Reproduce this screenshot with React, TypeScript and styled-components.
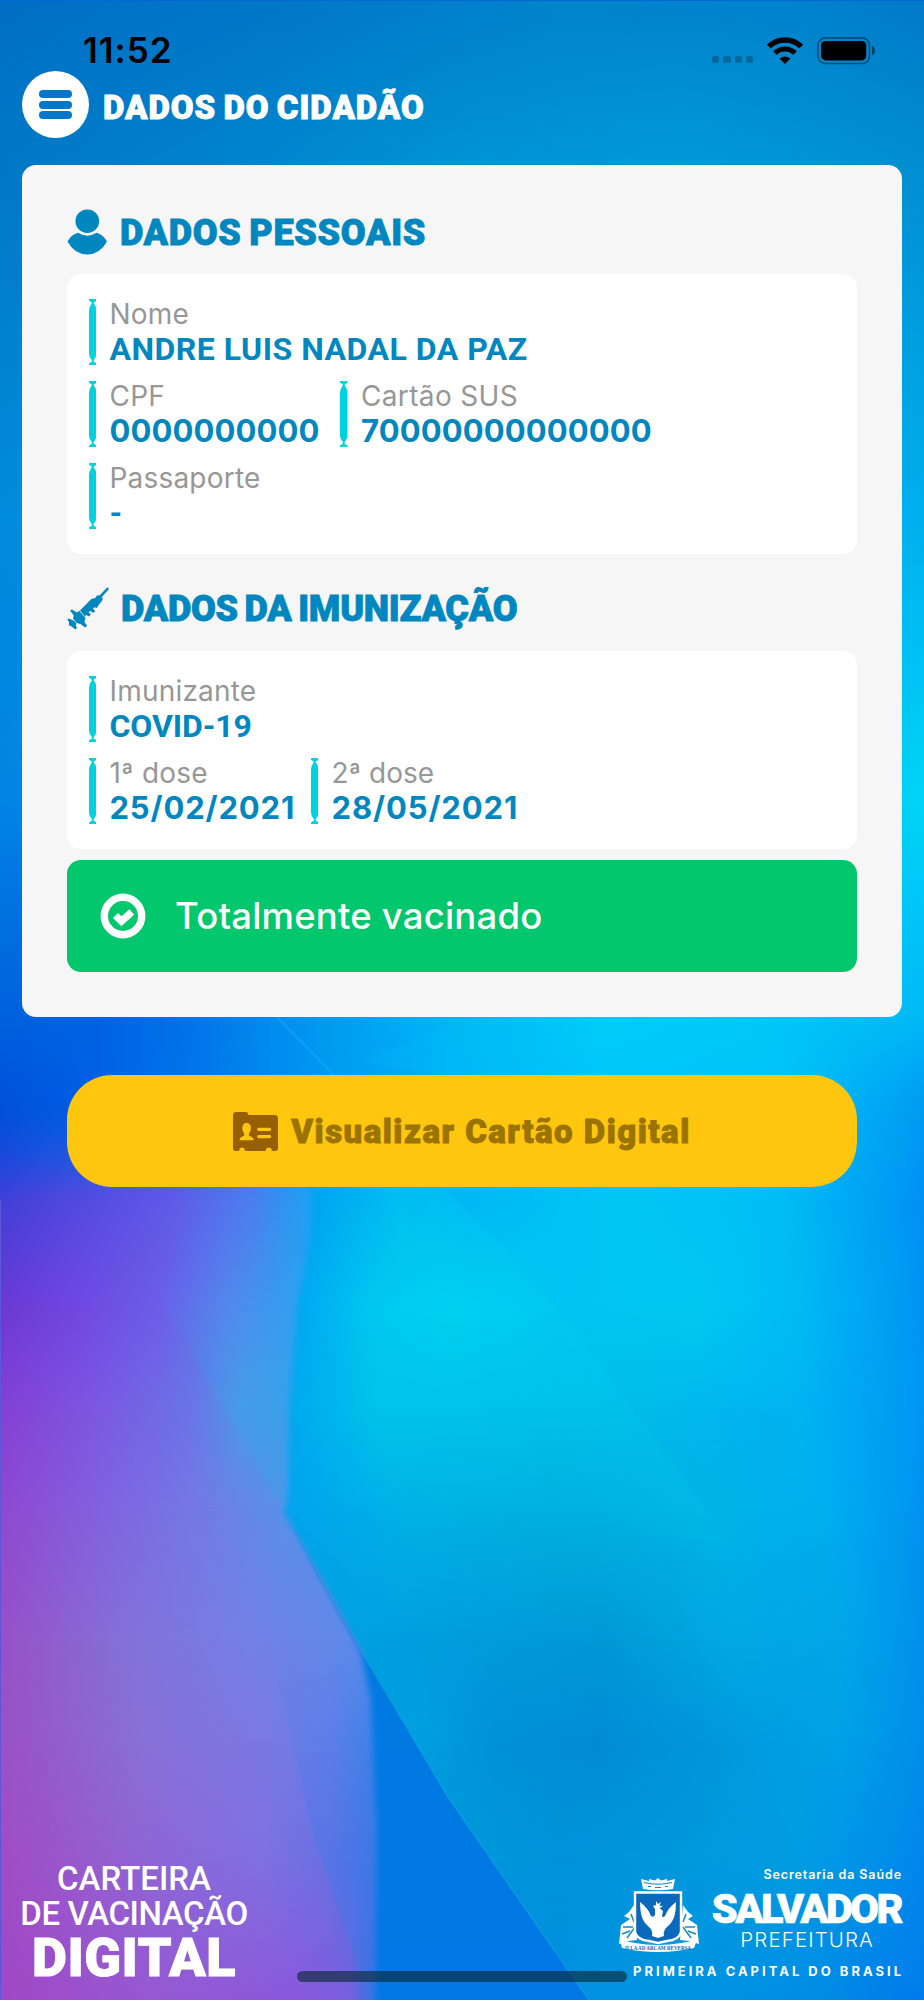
import React from "react";
import styled, { createGlobalStyle } from "styled-components";

const GlobalStyle = createGlobalStyle`
  * { box-sizing: border-box; }
  body { margin: 0; }
`;

const display = `Roboto, "Open Sans", sans-serif`;
const system = `Inter, "Liberation Sans", sans-serif`;

const Screen = styled.main`
  position: relative;
  display: flex;
  flex-direction: column;
  width: 924px;
  height: 2000px;
  overflow: hidden;
  background: #0084d0;
  font-family: ${system};
  white-space: nowrap;
`;

const Backdrop = styled.svg`
  position: absolute;
  inset: 0;
  width: 924px;
  height: 2000px;
`;

const Content = styled.div`
  position: relative;
  display: flex;
  flex-direction: column;
  flex: 1;
`;

const StatusBar = styled.div`
  display: flex;
  align-items: center;
  justify-content: space-between;
  height: 71px;
  padding: 30px 48px 0 83px;
`;

const Clock = styled.span`
  font-size: 35px;
  line-height: 41px;
  font-weight: 600;
  letter-spacing: 1px;
  color: #000000;
`;

const StatusIcons = styled.div`
  display: flex;
  align-items: center;
  gap: 14px;
`;

const Signal = styled.div`
  display: flex;
  gap: 4px;
  margin-top: 18px;
`;

const SignalDot = styled.i`
  width: 7.2px;
  height: 7.2px;
  border-radius: 2px;
  background: rgba(0, 0, 0, 0.24);
`;

const Header = styled.header`
  display: flex;
  align-items: center;
  gap: 13.5px;
  height: 67px;
  margin: 0 22.4px;
`;

const MenuButton = styled.button`
  display: flex;
  flex-direction: column;
  align-items: center;
  justify-content: center;
  gap: 2.4px;
  width: 67px;
  height: 67px;
  padding: 0;
  border: 0;
  border-radius: 50%;
  background: #ffffff;
`;

const MenuLine = styled.i`
  width: 33px;
  height: 8px;
  border-radius: 4px;
  background: #0077c8;
`;

const Title = styled.h1`
  margin: 6px 0 0;
  font-family: ${display};
  font-size: 33px;
  line-height: 40px;
  font-weight: 900;
  letter-spacing: 1px;
  word-spacing: -2px;
  -webkit-text-stroke: 0.9px currentColor;
  color: #ffffff;
`;

const Card = styled.section`
  margin: 27px 22.4px 0;
  padding: 44px 44.6px 44.5px;
  height: 852px;
  border-radius: 14px;
  background: #f6f6f6;
`;

const SectionHeading = styled.div<{ $top?: number }>`
  display: flex;
  align-items: center;
  gap: 12px;
  height: 46px;
  margin-top: ${({ $top }) => $top ?? 0}px;
  margin-bottom: 19.4px;
`;

const SectionTitle = styled.h2<{ $spacing: number }>`
  margin: 1px 0 0;
  font-family: ${display};
  font-size: 36px;
  line-height: 46px;
  font-weight: 900;
  letter-spacing: ${({ $spacing }) => $spacing}px;
  word-spacing: -2px;
  -webkit-text-stroke: 0.9px currentColor;
  color: #0087bf;
`;

const Panel = styled.div`
  display: flex;
  flex-direction: column;
  gap: 15.5px;
  padding: 24.5px 22px 24.5px;
  border-radius: 14px;
  background: #ffffff;
`;

const Row = styled.div`
  display: flex;
`;

const FieldBox = styled.div<{ $width?: number }>`
  display: flex;
  gap: 13px;
  width: ${({ $width }) => ($width ? `${$width}px` : "auto")};
  height: 66.5px;
`;

const Label = styled.div<{ $spacing: number }>`
  font-size: 28px;
  line-height: 31px;
  letter-spacing: ${({ $spacing }) => $spacing}px;
  color: #979797;
`;

const Value = styled.div<{ $spacing: number; $numeric?: boolean }>`
  font-family: ${({ $numeric }) => ($numeric ? system : display)};
  font-size: ${({ $numeric }) => ($numeric ? 31 : 32)}px;
  line-height: 38px;
  font-weight: 700;
  letter-spacing: ${({ $spacing }) => $spacing}px;
  color: #0087bf;
`;

const Status = styled.div`
  display: flex;
  align-items: center;
  gap: 29px;
  height: 112.5px;
  margin-top: 11px;
  padding-left: 33px;
  border-radius: 14px;
  background: #02c76c;
  font-size: 36.5px;
  font-weight: 500;
  letter-spacing: 0.2px;
  color: #ffffff;
`;

const CardButton = styled.button`
  display: flex;
  align-items: center;
  justify-content: center;
  gap: 13px;
  height: 112px;
  margin: 58px 67px 0;
  padding: 0;
  border: 0;
  border-radius: 45px;
  background: #fec60e;
  font-family: ${display};
  font-size: 33px;
  font-weight: 900;
  letter-spacing: 1.5px;
  -webkit-text-stroke: 0.9px currentColor;
  color: #9b7300;
`;

const Footer = styled.footer`
  display: flex;
  justify-content: space-between;
  align-items: flex-end;
  margin-top: auto;
  padding: 0 22px 15.5px;
  color: #ffffff;
`;

const Brand = styled.div`
  width: 224px;
  display: flex;
  flex-direction: column;
  align-items: center;
  font-family: ${display};
`;

const BrandLine = styled.span<{ $spacing: number }>`
  font-size: 33px;
  line-height: 35px;
  font-weight: 500;
  letter-spacing: ${({ $spacing }) => $spacing}px;
`;

const BrandStrong = styled.span`
  font-size: 54px;
  line-height: 54px;
  font-weight: 900;
  letter-spacing: 0.5px;
  -webkit-text-stroke: 1px currentColor;
`;

const City = styled.div`
  display: flex;
  flex-direction: column;
  align-items: flex-end;
  margin-bottom: 3.5px;
`;

const CityTop = styled.div`
  display: flex;
  gap: 13px;
`;

const CityText = styled.div`
  display: flex;
  flex-direction: column;
  align-items: flex-end;
`;

const Department = styled.span`
  font-size: 12.5px;
  line-height: 20px;
  font-weight: 600;
  letter-spacing: 0.9px;
`;

const CityName = styled.span`
  margin-right: 1px;
  font-family: ${display};
  font-size: 41.5px;
  line-height: 47px;
  font-weight: 900;
  letter-spacing: -2.5px;
  -webkit-text-stroke: 0.6px currentColor;
`;

const CityHall = styled.span`
  margin-right: 28px;
  font-size: 20.5px;
  line-height: 16px;
  font-weight: 300;
  letter-spacing: 1.1px;
`;

const Tagline = styled.span`
  margin-top: 9.5px;
  margin-right: -2px;
  font-size: 13px;
  line-height: 20px;
  font-weight: 700;
  letter-spacing: 3px;
`;

const HomeIndicator = styled.div`
  position: absolute;
  left: 297px;
  bottom: 18px;
  width: 330px;
  height: 11px;
  border-radius: 6px;
  background: rgba(8, 38, 52, 0.62);
`;

type Band = { y: number; stops: [number, string][] };

const seaBands: Band[] = [
  { y: 0, stops: [[0, "#006fc6"], [300, "#0078c8"], [560, "#0084cc"], [800, "#0082cc"], [924, "#007ac8"]] },
  { y: 160, stops: [[0, "#0078c6"], [220, "#0082cc"], [440, "#0092d2"], [680, "#0099d8"], [924, "#008ed0"]] },
  { y: 520, stops: [[0, "#008cdc"], [400, "#00a0e0"], [924, "#00b0ee"]] },
  { y: 800, stops: [[0, "#0084e4"], [400, "#00a0e8"], [924, "#00d4f8"]] },
  { y: 1020, stops: [[0, "#0060dc"], [100, "#0062e4"], [200, "#0076ea"], [300, "#0094f0"], [440, "#00b4f6"], [600, "#00ccf8"], [760, "#00c8f8"], [924, "#00b8f6"]] },
  { y: 1100, stops: [[0, "#0052dc"], [100, "#0060e4"], [220, "#007cec"], [340, "#009cf2"], [480, "#00b8f8"], [600, "#00c6fa"], [780, "#00c4f8"], [924, "#009cf2"]] },
  { y: 1200, stops: [[0, "#1048dc"], [300, "#00a0f0"], [400, "#00c0f0"], [470, "#00b8f4"], [620, "#00c8f4"], [780, "#00bef4"], [924, "#0090f4"]] },
  { y: 1310, stops: [[0, "#0088e8"], [300, "#00a8f2"], [370, "#00c8f0"], [450, "#00d0f0"], [560, "#00c4f2"], [700, "#00c8f2"], [800, "#00baf4"], [924, "#0094f2"]] },
  { y: 1410, stops: [[0, "#0088e8"], [290, "#00a8f0"], [380, "#00c4ea"], [520, "#00c2e8"], [660, "#00baea"], [800, "#00b4f2"], [924, "#0094f2"]] },
  { y: 1510, stops: [[0, "#0088e8"], [290, "#00a4ee"], [400, "#00b2e6"], [550, "#00b0e0"], [720, "#00b4e6"], [830, "#00aef0"], [924, "#0090f0"]] },
  { y: 1640, stops: [[0, "#0080e0"], [365, "#00a0e0"], [460, "#009cdc"], [600, "#0098d6"], [730, "#00a8e0"], [850, "#00a4e8"], [924, "#008eec"]] },
  { y: 1740, stops: [[0, "#0078e0"], [420, "#00a0e0"], [500, "#0090d6"], [600, "#008cd4"], [740, "#009ade"], [840, "#00a0e6"], [924, "#008aea"]] },
  { y: 1860, stops: [[0, "#0078e0"], [480, "#0098dc"], [560, "#0092da"], [660, "#0098dc"], [800, "#009ce2"], [924, "#0084ec"]] },
  { y: 2000, stops: [[0, "#0078e8"], [570, "#0090e0"], [680, "#0094e0"], [820, "#008ce4"], [924, "#0078ec"]] },
];

const violetBands: Band[] = [
  { y: 1100, stops: [[0, "#0a50dc"], [100, "#1860e4"], [220, "#107cec"], [312, "#009cf2"]] },
  { y: 1190, stops: [[0, "#3c40d8"], [60, "#4c48dc"], [170, "#6058e8"], [250, "#4c7cee"], [310, "#1ca2f2"]] },
  { y: 1306, stops: [[0, "#6c38d4"], [80, "#7048e2"], [165, "#6a60e8"], [230, "#5488ec"], [295, "#30a0f0"]] },
  { y: 1408, stops: [[0, "#8440d4"], [100, "#7c58e2"], [190, "#6a74e6"], [240, "#4c98e8"], [295, "#38a0ea"]] },
  { y: 1510, stops: [[0, "#9048d0"], [110, "#8064e0"], [200, "#747ae6"], [285, "#5890e8"]] },
  { y: 1640, stops: [[0, "#9850c8"], [120, "#8470d8"], [250, "#7480e6"], [357, "#5c8aea"]] },
  { y: 1740, stops: [[0, "#9a50c6"], [140, "#8870d8"], [260, "#7c78e2"], [330, "#6480e8"], [375, "#3c84e8"]] },
  { y: 1860, stops: [[0, "#a04cc6"], [140, "#9064d4"], [260, "#8070e2"], [330, "#6870e2"], [377, "#3878e4"]] },
  { y: 2000, stops: [[0, "#a048c6"], [150, "#9658d2"], [300, "#8a58dc"], [350, "#7860de"], [377, "#2870e4"]] },
];

/* Each band fades in over the one above, so colours blend in both directions. */
const Bands = ({ id, bands, width }: { id: string; bands: Band[]; width: number }) => (
  <>
    {bands.map((band, i) => {
      const from = i === 0 ? band.y : bands[i - 1].y;
      const span = 2000 - from;
      const fade = (band.y - from) / span;
      return (
        <g key={band.y}>
          <linearGradient id={`${id}${i}`} gradientUnits="userSpaceOnUse" x1="0" x2={width} y1="0" y2="0">
            {band.stops.map(([x, color]) => (
              <stop key={x} offset={x / width} stopColor={color} />
            ))}
          </linearGradient>
          <linearGradient id={`${id}Fade${i}`} x1="0" x2="0" y1="0" y2="1">
            <stop offset="0" stopColor="#fff" stopOpacity={i === 0 ? 1 : 0} />
            <stop offset={fade} stopColor="#fff" />
          </linearGradient>
          <mask id={`${id}Mask${i}`} maskUnits="userSpaceOnUse" x="0" y={from} width={width} height={span}>
            <rect x="0" y={from} width={width} height={span} fill={`url(#${id}Fade${i})`} />
          </mask>
          <rect x="0" y={from} width={width} height={span} fill={`url(#${id}${i})`} mask={`url(#${id}Mask${i})`} />
        </g>
      );
    })}
  </>
);

const Background = () => (
  <Backdrop viewBox="0 0 924 2000" aria-hidden="true">
    <defs>
      <linearGradient id="edgeFade" x1="0" x2="0" y1="0" y2="1">
        <stop offset="0" stopColor="#000" />
        <stop offset="0.1" stopColor="#fff" />
      </linearGradient>
      <filter id="soft" x="-5%" y="-5%" width="110%" height="110%">
        <feGaussianBlur stdDeviation="3" />
      </filter>
      <mask id="violetShape" maskUnits="userSpaceOnUse" x="0" y="1100" width="400" height="900">
        <path
          d="M-20 1106 L312 1106 L312 1215 Q308 1260 298 1300 L290 1400 L288 1500 L284 1512 L330 1595 L360 1650 L371 1700 L377 1830 L376 2020 L-20 2020Z"
          fill="url(#edgeFade)"
          filter="url(#soft)"
        />
      </mask>
      <linearGradient id="deep" x1="0" x2="0" y1="0" y2="1">
        <stop offset="0" stopColor="#0088e0" />
        <stop offset="0.35" stopColor="#007ae0" />
        <stop offset="1" stopColor="#0078e6" />
      </linearGradient>
      <linearGradient id="ray" x1="0" x2="1" y1="1" y2="0">
        <stop offset="0.35" stopColor="#00e0f0" stopOpacity="0" />
        <stop offset="0.6" stopColor="#00e0f0" stopOpacity="0.22" />
      </linearGradient>
      <linearGradient id="facet" x1="0" x2="0" y1="0" y2="1">
        <stop offset="0.2" stopColor="#30a8ec" stopOpacity="0" />
        <stop offset="0.8" stopColor="#30a8ec" stopOpacity="0.26" />
      </linearGradient>
      <linearGradient id="fold" x1="0" x2="0" y1="0" y2="1">
        <stop offset="0" stopColor="#4078e8" stopOpacity="0" />
        <stop offset="0.6" stopColor="#4078e8" stopOpacity="0.4" />
      </linearGradient>
    </defs>
    <Bands id="sea" bands={seaBands} width={924} />
    <path d="M439 1186 Q520 1260 589 1351 T730 1545 L420 1500 L400 1250Z" fill="url(#ray)" opacity="0.7" />
    <path d="M589 1450 Q680 1590 720 1690 T830 1900 L924 2000 V1350Z" fill="#00b8f0" opacity="0.08" />
    <path d="M277 1017 L335 1076" stroke="#18b0f4" strokeWidth="2" opacity="0.5" />
    <path d="M360 1062 L475 1017 H700 L480 1080Z" fill="#00d0f8" opacity="0.12" />
    <path d="M284 1512 L365 1657 L448 1797 L589 2000 L350 2000 L350 1640Z" fill="url(#deep)" />
    <path d="M300 1540 L365 1657 L448 1797 L589 2000" stroke="#10a0e0" strokeWidth="2" fill="none" opacity="0.6" />
    <g mask="url(#violetShape)">
      <Bands id="violet" bands={violetBands} width={400} />
      <path d="M120 1210 L165 1306 L284 1512 L320 1512 L320 1210Z" fill="url(#facet)" />
      <path d="M270 1650 L295 1752 L312 1830 L368 2000 H380 V1650Z" fill="url(#fold)" />
    </g>
    <rect width="924" height="1" fill="#0068d4" />
    <rect y="1200" width="1" height="800" fill="#5858d8" />
  </Backdrop>
);

const WifiIcon = () => (
  <svg width="36" height="27" viewBox="0 0 36 27">
    <path d="M1.8 9.6 A23 23 0 0 1 34.2 9.6" fill="none" stroke="#000" strokeWidth="5.4" />
    <path d="M8 16.1 A14.3 14.3 0 0 1 28 16.1" fill="none" stroke="#000" strokeWidth="5" />
    <path d="M18 27 L12.6 21.5 A8 8 0 0 1 23.4 21.5Z" fill="#000" />
  </svg>
);

const BatteryIcon = () => (
  <svg width="59" height="28" viewBox="0 0 59 28">
    <rect x="0.9" y="0.9" width="51.6" height="25.6" rx="7.5" fill="none" stroke="#000" strokeOpacity="0.42" strokeWidth="1.7" />
    <rect x="4" y="4" width="45.2" height="19.4" rx="4.4" fill="#000" />
    <path d="M55 9 Q58 10.5 58 13.8 T55 18.6Z" fill="#000" fillOpacity="0.48" />
  </svg>
);

const PersonIcon = () => (
  <svg width="41" height="46" viewBox="0 0 41 46" fill="#0087bf">
    <circle cx="20.3" cy="12.2" r="11.8" />
    <path d="M11 23.8 Q20.3 29.5 29.6 23.8 Q36 25.5 40 32.5 Q33 45.3 20.3 45.5 Q7.5 45.3 0.5 32.5 Q4.5 25.5 11 23.8Z" />
  </svg>
);

const SyringeIcon = () => (
  <svg width="42" height="43" viewBox="0 0 42 43" fill="#0087bf">
    <path d="M40.4 0.3 L42 1.9 L34.8 10 L35.8 12 L34.2 15 L32.4 17 L29.8 21 L27.6 20.2 L25.8 21.6 L28.2 24 L26.2 26 L23.2 23.8 L21.6 25.2 L23.8 27.6 L21.8 29.4 L19 27.8 L18.2 29.8 L13 23.4 L24.6 11.8 L28 11.2 L30 8.4 L32.8 8.2Z" />
    <path d="M3 23.4 L4.8 22.6 L10 25.4 L12.2 23.8 L18.6 31 L17.4 34.8 L20 38.8 L18.2 40.6 L13.4 37 L9.8 36 L6 31.4 L6.8 28.6Z" />
    <path d="M0.3 32.6 L2 31.6 L7.4 34 L9.4 36.6 L8.8 38.8 L10 41 L8.4 42.4 L4.6 39.6 L2 38.2 L2 35Z" />
  </svg>
);

const CheckIcon = () => (
  <svg width="46" height="46" viewBox="0 0 46 46">
    <circle cx="23" cy="23" r="18.7" fill="none" stroke="#fff" strokeWidth="7.4" />
    <path d="M15.5 22.5 L21.4 28.3 L31.8 19" fill="none" stroke="#fff" strokeWidth="7.2" />
  </svg>
);

const IdCardIcon = () => (
  <svg width="45" height="39" viewBox="0 0 45 39">
    <path
      d="M3 0 H13 Q15 0 15.6 3 H41.5 Q45 3 45 6.5 V36 Q45 39 42 39 H39 Q38.5 35.6 35.8 35.6 T32.5 39 H12 Q11.5 35.6 9 35.6 T6 39 H3 Q0 39 0 36 V3 Q0 0 3 0Z"
      fill="#966000"
    />
    <path d="M13.5 11 C17 11 18 13.5 17.8 17 C17.6 20 15.8 21 15.8 22.8 C16 24.8 20.5 24.5 20.8 28.3 H6.5 C6.8 24.5 11.2 24.8 11.4 22.8 C11.4 21 9.6 20 9.4 17 C9.2 13.5 10.2 11 13.5 11Z" fill="#fec60e" />
    <path d="M25.8 17.4 H36.5 M25.8 24.6 H36.5" stroke="#fec60e" strokeWidth="3.4" strokeLinecap="round" />
  </svg>
);

/* Capsule-shaped marker shown beside each field. */
const Marker = () => (
  <svg width="7.5" height="66.5" viewBox="0 0 7.5 66.5" fill="#00d3df">
    <path d="M0 0 H7.5 V1.8 L4.8 3.6 V4.4 Q7.5 8 7.5 11.5 V54.5 Q7.5 58 4.6 61.2 V62.4 L7.5 64.4 V66.5 H0 V64.4 L2.9 62.4 V61.2 Q0 58 0 54.5 V11.5 Q0 8 2.7 4.4 V3.6 L0 1.8Z" />
  </svg>
);

const CrestArt = styled.svg`
  margin-top: 13px;
  overflow: visible;
`;

const Crest = () => (
  <CrestArt width="80" height="74" viewBox="0 0 80 74">
    <path d="M22 1 L30 3 V1 L36 2.4 L39 0 L42 2.4 L48 1 V3 L56 1 L54 11 Q39 13.5 24 11Z" fill="#fff" />
    <path d="M25 4.5 Q39 8 53 4.5 M29 8.5 H32 M36 9.5 H42 M46 8.5 H49" stroke="#1088cc" strokeWidth="1.2" fill="none" />
    <path d="M15 27 L10 34 L5 38 L11 41 L2 47 L0 66 L10 63 L18 62 Z M64 27 L69 34 L74 38 L69 41 L78 47 L80 66 L70 63 L61 62Z" fill="#fff" />
    <path d="M4 49 H14 M3 56 L11 53 M8 60 L16 49 M76 49 H66 M77 56 L69 53 M72 60 L64 49 M12 36 L15 44 M67 36 L64 44" stroke="#148acb" strokeWidth="1.5" fill="none" />
    <path d="M16 14.5 H62 V54 Q60 62 48 63 L39 65 L30 63 Q18 62 16 54Z" fill="#0a69bd" stroke="#fff" strokeWidth="2.4" />
    <path d="M1 62 L16 65 Q39 69 62 65 L78 62 L75 70 Q58 74 39 74 T3 70Z" fill="#fff" />
    <path d="M37 23 L39 26 L42 24 L40.5 27.5 L44 28.5 L40.5 30 L44 33 L43 38 Q44 40 46 38 Q49 30 57 24 Q57 39 52 45 L46 51 Q44 55 45 58 L39 60 L33 58 Q34 55 32 51 L26 45 Q21 39 21 24 Q29 30 32 38 Q34 40 36 37 L36 31 L34 28 L37 27Z" fill="#fff" />
    <text
      x="39"
      y="71.8"
      textAnchor="middle"
      textLength="66"
      lengthAdjust="spacingAndGlyphs"
      fontFamily="Liberation Serif"
      fontSize="6"
      fontWeight="700"
      fill="#0a69bd"
    >
      ILLA AD ARCAM REVERSA
    </text>
  </CrestArt>
);

type FieldProps = {
  label: string;
  value: string;
  width?: number;
  numeric?: boolean;
  labelSpacing?: number;
  valueSpacing?: number;
};

const Field = ({ label, value, width, numeric, labelSpacing = 0.2, valueSpacing = 0 }: FieldProps) => (
  <FieldBox $width={width}>
    <Marker />
    <div>
      <Label $spacing={labelSpacing}>{label}</Label>
      <Value $spacing={valueSpacing} $numeric={numeric}>
        {value}
      </Value>
    </div>
  </FieldBox>
);

const App = () => (
  <Screen>
    <GlobalStyle />
    <Background />
    <Content>
      <StatusBar>
        <Clock>11:52</Clock>
        <StatusIcons>
          <Signal>
            <SignalDot />
            <SignalDot />
            <SignalDot />
            <SignalDot />
          </Signal>
          <WifiIcon />
          <BatteryIcon />
        </StatusIcons>
      </StatusBar>

      <Header>
        <MenuButton aria-label="Menu">
          <MenuLine />
          <MenuLine />
          <MenuLine />
        </MenuButton>
        <Title>DADOS DO CIDADÃO</Title>
      </Header>

      <Card>
        <SectionHeading>
          <PersonIcon />
          <SectionTitle $spacing={0.7}>DADOS PESSOAIS</SectionTitle>
        </SectionHeading>
        <Panel>
          <Field label="Nome" value="ANDRE LUIS NADAL DA PAZ" valueSpacing={0.5} />
          <Row>
            <Field label="CPF" value="0000000000" width={251.5} numeric valueSpacing={0.1} />
            <Field label="Cartão SUS" value="70000000000000" numeric labelSpacing={0.35} valueSpacing={0.1} />
          </Row>
          <Field label="Passaporte" value="-" />
        </Panel>

        <SectionHeading $top={32}>
          <SyringeIcon />
          <SectionTitle $spacing={-0.25}>DADOS DA IMUNIZAÇÃO</SectionTitle>
        </SectionHeading>
        <Panel>
          <Field label="Imunizante" value="COVID-19" valueSpacing={-0.1} />
          <Row>
            <Field label="1ª dose" value="25/02/2021" width={222} numeric valueSpacing={0.85} />
            <Field label="2ª dose" value="28/05/2021" numeric labelSpacing={0} valueSpacing={0.9} />
          </Row>
        </Panel>

        <Status>
          <CheckIcon />
          Totalmente vacinado
        </Status>
      </Card>

      <CardButton>
        <IdCardIcon />
        Visualizar Cartão Digital
      </CardButton>

      <Footer>
        <Brand>
          <BrandLine $spacing={0}>CARTEIRA</BrandLine>
          <BrandLine $spacing={-0.4}>DE VACINAÇÃO</BrandLine>
          <BrandStrong>DIGITAL</BrandStrong>
        </Brand>
        <City>
          <CityTop>
            <Crest />
            <CityText>
              <Department>Secretaria da Saúde</Department>
              <CityName>SALVADOR</CityName>
              <CityHall>PREFEITURA</CityHall>
            </CityText>
          </CityTop>
          <Tagline>PRIMEIRA CAPITAL DO BRASIL</Tagline>
        </City>
      </Footer>
    </Content>
    <HomeIndicator />
  </Screen>
);

export default App;
